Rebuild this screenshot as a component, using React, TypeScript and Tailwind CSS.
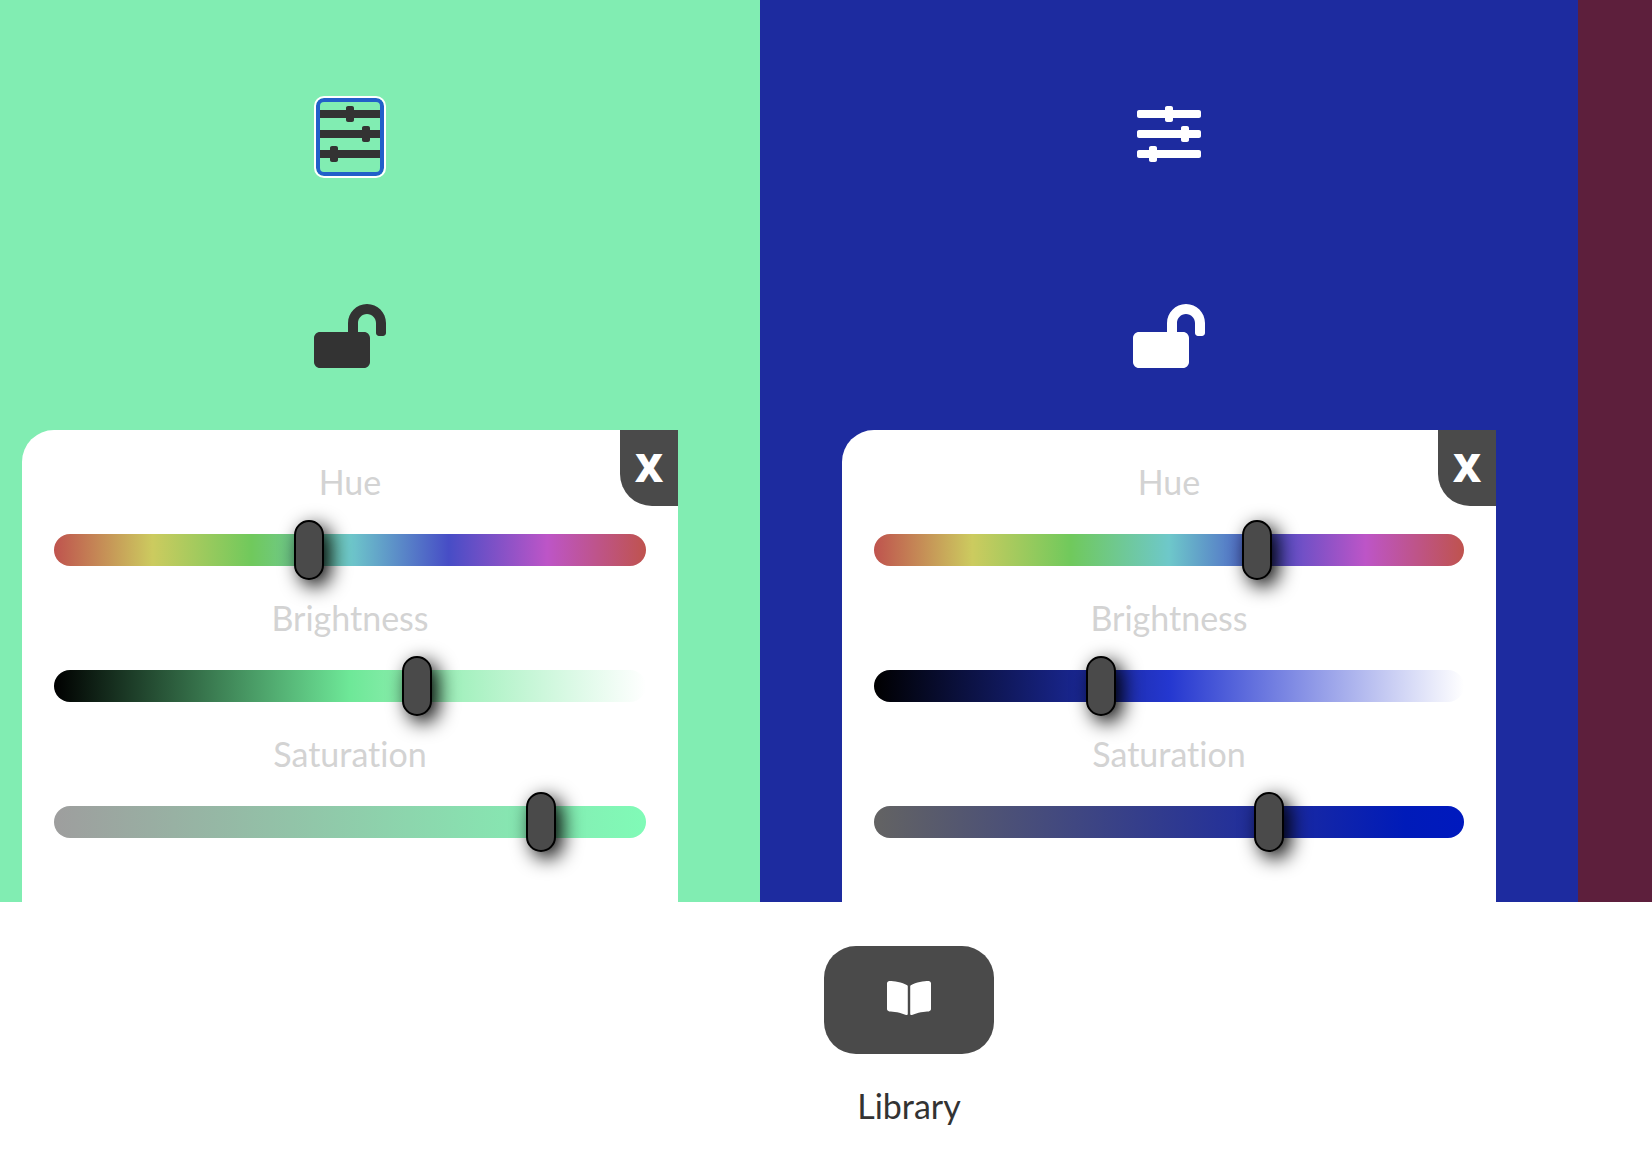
import { useState } from "react";
import { FaBookOpen, FaLockOpen, FaSlidersH } from "react-icons/fa";

type Channel = { label: string; value: number; track: string };
type Swatch = {
  id: string;
  column: string;
  inset: string;
  adjust: string;
  channels: Channel[];
};

const hueTrack =
  "bg-[linear-gradient(to_right,#bf534e,#cccb5f,#70c95c,#6ec8ca,#474dc6,#bd55c7,#bf534e)]";

const swatches: Swatch[] = [
  {
    id: "mint",
    column: "bg-[#81edb2] text-[#333333]",
    inset: "pl-[22px] pr-[82px]",
    adjust:
      "after:absolute after:-inset-0.5 after:rounded-lg after:border-4 after:border-[#2260c9] after:outline-2 after:outline-white after:content-['']",
    channels: [
      { label: "Hue", value: 427, track: hueTrack },
      {
        label: "Brightness",
        value: 620,
        track: "bg-[linear-gradient(to_right,#000000,#6ee898,#ffffff)]",
      },
      {
        label: "Saturation",
        value: 840,
        track: "bg-[linear-gradient(to_right,#9e9e9e,#80fbb7)]",
      },
    ],
  },
  {
    id: "blue",
    column: "bg-[#1d2b9f] text-white",
    inset: "px-[82px]",
    adjust: "",
    channels: [
      { label: "Hue", value: 657, track: hueTrack },
      {
        label: "Brightness",
        value: 379,
        track: "bg-[linear-gradient(to_right,#000000,#2437d0,#ffffff)]",
      },
      {
        label: "Saturation",
        value: 679,
        track: "bg-[linear-gradient(to_right,#636363,#1d2b9f_68%,#001bb9_90%,#0019be)]",
      },
    ],
  },
];

function ChannelSlider({ id, channel }: { id: string; channel: Channel }) {
  const [value, setValue] = useState(channel.value);
  return (
    <div className="flex flex-col gap-8">
      <label htmlFor={id} className="text-center text-[34px] leading-10 text-[#d3d3d3]">
        {channel.label}
      </label>
      <input
        id={id}
        type="range"
        min={0}
        max={1000}
        value={value}
        onChange={(e) => setValue(Number(e.target.value))}
        className={`${channel.track} block h-8 w-full cursor-pointer appearance-none rounded-full [&::-webkit-slider-thumb]:h-[60px] [&::-webkit-slider-thumb]:w-[30px] [&::-webkit-slider-thumb]:appearance-none [&::-webkit-slider-thumb]:rounded-full [&::-webkit-slider-thumb]:border-2 [&::-webkit-slider-thumb]:border-black [&::-webkit-slider-thumb]:bg-[#4a4a4a] [&::-webkit-slider-thumb]:shadow-[6px_6px_20px_#000000]`}
      />
    </div>
  );
}

function SwatchColumn({ swatch }: { swatch: Swatch }) {
  return (
    <section className={`${swatch.column} ${swatch.inset} flex flex-col items-center pt-[100px]`}>
      <button
        type="button"
        aria-label="Adjust color"
        className={`${swatch.adjust} relative flex h-[74px] items-start pt-0.5 outline-none`}
      >
        <FaSlidersH size={64} />
      </button>
      <button type="button" aria-label="Lock color" className="mt-[130px] outline-none">
        <FaLockOpen className="h-16 w-[72px]" />
      </button>
      <div className="relative mt-[62px] flex w-full flex-col gap-8 rounded-tl-[32px] bg-white px-8 pt-8 pb-16">
        <button
          type="button"
          aria-label="Close"
          className="absolute top-0 right-0 h-[76px] w-[58px] rounded-bl-[32px] bg-[#4a4a4a] pb-1 font-[Open_Sans,sans-serif] text-[39px] leading-none font-extrabold text-white"
        >
          X
        </button>
        {swatch.channels.map((channel) => (
          <ChannelSlider
            key={channel.label}
            id={`${swatch.id}-${channel.label.toLowerCase()}`}
            channel={channel}
          />
        ))}
      </div>
    </section>
  );
}

export default function App() {
  return (
    <main className="min-h-screen bg-white font-[Lato,sans-serif] [font-variant-ligatures:none]">
      <div className="grid grid-cols-[760fr_818fr_74fr]">
        {swatches.map((swatch) => (
          <SwatchColumn key={swatch.id} swatch={swatch} />
        ))}
        <section className="bg-[#5d1f3c]" />
      </div>
      <div className="flex justify-center pt-11 pl-[166px]">
        <div className="flex flex-col items-center gap-8">
          <button
            type="button"
            aria-labelledby="library-label"
            className="flex h-[108px] w-[170px] items-center justify-center rounded-[32px] bg-[#4a4a4a] pb-1 text-white"
          >
            <FaBookOpen className="h-10 w-11" />
          </button>
          <span id="library-label" className="text-[34px] leading-10 text-[#333333]">
            Library
          </span>
        </div>
      </div>
    </main>
  );
}
